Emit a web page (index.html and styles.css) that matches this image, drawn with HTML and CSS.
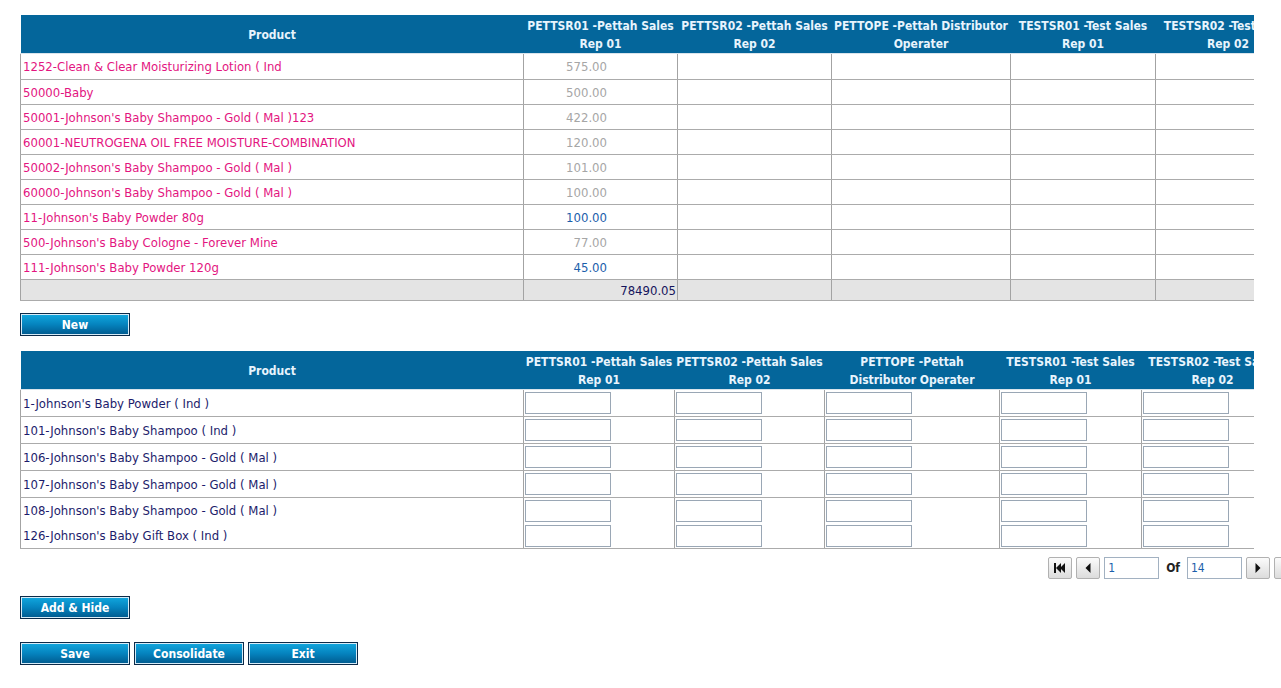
FILE: index.html
```html
<!DOCTYPE html>
<html>
<head>
<meta charset="utf-8">
<title>Allocation</title>
<link rel="stylesheet" href="styles.css">
</head>
<body>
<div class="page">
  <div class="grid-clip">
    <table class="grid g1">
      <colgroup>
        <col class="w-prod"><col class="w154"><col class="w154"><col class="w179"><col class="w145"><col class="w145">
      </colgroup>
      <thead>
        <tr>
          <th>Product</th>
          <th>PETTSR01 -Pettah Sales<br>Rep 01</th>
          <th>PETTSR02 -Pettah Sales<br>Rep 02</th>
          <th>PETTOPE -Pettah Distributor<br>Operater</th>
          <th>TESTSR01 -Test Sales<br>Rep 01</th>
          <th>TESTSR02 -Test Sales<br>Rep 02</th>
        </tr>
      </thead>
      <tbody>
        <tr><td class="prod">1252-Clean &amp; Clear Moisturizing Lotion ( Ind</td><td class="num grey">575.00</td><td></td><td></td><td></td><td></td></tr>
        <tr><td class="prod">50000-Baby</td><td class="num grey">500.00</td><td></td><td></td><td></td><td></td></tr>
        <tr><td class="prod">50001-Johnson's Baby Shampoo - Gold ( Mal )123</td><td class="num grey">422.00</td><td></td><td></td><td></td><td></td></tr>
        <tr><td class="prod">60001-NEUTROGENA OIL FREE MOISTURE-COMBINATION</td><td class="num grey">120.00</td><td></td><td></td><td></td><td></td></tr>
        <tr><td class="prod">50002-Johnson's Baby Shampoo - Gold ( Mal )</td><td class="num grey">101.00</td><td></td><td></td><td></td><td></td></tr>
        <tr><td class="prod">60000-Johnson's Baby Shampoo - Gold ( Mal )</td><td class="num grey">100.00</td><td></td><td></td><td></td><td></td></tr>
        <tr><td class="prod">11-Johnson's Baby Powder 80g</td><td class="num blue">100.00</td><td></td><td></td><td></td><td></td></tr>
        <tr><td class="prod">500-Johnson's Baby Cologne - Forever Mine</td><td class="num grey">77.00</td><td></td><td></td><td></td><td></td></tr>
        <tr><td class="prod">111-Johnson's Baby Powder 120g</td><td class="num blue">45.00</td><td></td><td></td><td></td><td></td></tr>
        <tr class="total"><td></td><td class="sum">78490.05</td><td></td><td></td><td></td><td></td></tr>
      </tbody>
    </table>
  </div>

  <div class="btn-row row-new"><button class="btn">New</button></div>

  <div class="grid-clip clip2">
    <table class="grid g2">
      <colgroup>
        <col class="w-prod"><col class="w151"><col class="w150"><col class="w175"><col class="w142"><col class="w142">
      </colgroup>
      <thead>
        <tr>
          <th>Product</th>
          <th>PETTSR01 -Pettah Sales<br>Rep 01</th>
          <th>PETTSR02 -Pettah Sales<br>Rep 02</th>
          <th>PETTOPE -Pettah<br>Distributor Operater</th>
          <th>TESTSR01 -Test Sales<br>Rep 01</th>
          <th>TESTSR02 -Test Sales<br>Rep 02</th>
        </tr>
      </thead>
      <tbody>
        <tr><td class="prod2">1-Johnson's Baby Powder ( Ind )</td><td class="in"><input type="text"></td><td class="in"><input type="text"></td><td class="in"><input type="text"></td><td class="in"><input type="text"></td><td class="in"><input type="text"></td></tr>
        <tr><td class="prod2">101-Johnson's Baby Shampoo ( Ind )</td><td class="in"><input type="text"></td><td class="in"><input type="text"></td><td class="in"><input type="text"></td><td class="in"><input type="text"></td><td class="in"><input type="text"></td></tr>
        <tr><td class="prod2">106-Johnson's Baby Shampoo - Gold ( Mal )</td><td class="in"><input type="text"></td><td class="in"><input type="text"></td><td class="in"><input type="text"></td><td class="in"><input type="text"></td><td class="in"><input type="text"></td></tr>
        <tr><td class="prod2">107-Johnson's Baby Shampoo - Gold ( Mal )</td><td class="in"><input type="text"></td><td class="in"><input type="text"></td><td class="in"><input type="text"></td><td class="in"><input type="text"></td><td class="in"><input type="text"></td></tr>
        <tr class="open"><td class="prod2">108-Johnson's Baby Shampoo - Gold ( Mal )</td><td class="in"><input type="text"></td><td class="in"><input type="text"></td><td class="in"><input type="text"></td><td class="in"><input type="text"></td><td class="in"><input type="text"></td></tr>
        <tr class="close"><td class="prod2">126-Johnson's Baby Gift Box ( Ind )</td><td class="in"><input type="text"></td><td class="in"><input type="text"></td><td class="in"><input type="text"></td><td class="in"><input type="text"></td><td class="in"><input type="text"></td></tr>
      </tbody>
    </table>
  </div>

  <div class="pager">
    <button class="pg" aria-label="First">
      <svg width="12" height="10" viewBox="0 0 12 10"><rect x="0" y="0" width="2" height="10" fill="#111"/><polygon points="2,5 7,0 7,10" fill="#111"/><polygon points="6,5 11,0 11,10" fill="#111"/></svg>
    </button>
    <button class="pg" aria-label="Previous">
      <svg width="6" height="10" viewBox="0 0 6 10"><polygon points="0.5,5 5.5,0 5.5,10" fill="#111"/></svg>
    </button>
    <input class="pg-in" type="text" value="1">
    <span class="of">Of</span>
    <input class="pg-in" type="text" value="14">
    <button class="pg" aria-label="Next">
      <svg width="6" height="10" viewBox="0 0 6 10"><polygon points="0.5,0 5.5,5 0.5,10" fill="#111"/></svg>
    </button>
    <button class="pg" aria-label="Last">
      <svg width="12" height="10" viewBox="0 0 12 10"><polygon points="1,0 6,5 1,10" fill="#111"/><polygon points="5,0 10,5 5,10" fill="#111"/><rect x="10" y="0" width="2" height="10" fill="#111"/></svg>
    </button>
  </div>

  <div class="btn-row row-add"><button class="btn">Add &amp; Hide</button></div>

  <div class="btn-row row-actions">
    <button class="btn">Save</button>
    <button class="btn">Consolidate</button>
    <button class="btn">Exit</button>
  </div>
</div>
</body>
</html>
```

FILE: styles.css
```css
html, body {
  margin: 0;
  padding: 0;
  background: #ffffff;
  overflow: hidden;
}

body {
  font-family: "DejaVu Sans Condensed", "DejaVu Sans", sans-serif;
  font-size: 13px;
  color: #1c1c6b;
}

.page {
  width: 1278px;
  padding: 15px 0 0 20px;
}

.grid-clip {
  width: 1234px;
  overflow: hidden;
}

.clip2 {
  margin-top: 15px;
}

table.grid {
  border-collapse: collapse;
  table-layout: fixed;
}

.g1 { width: 1280px; }
.g2 { width: 1263px; }

.w-prod { width: 503px; }
.w154 { width: 154px; }
.w179 { width: 179px; }
.w145 { width: 145px; }
.w151 { width: 151px; }
.w150 { width: 150px; }
.w175 { width: 175px; }
.w142 { width: 142px; }

.grid th {
  box-sizing: border-box;
  background: #04669b;
  color: #e8f4fd;
  font-weight: bold;
  font-size: 12px;
  line-height: 18px;
  height: 38px;
  padding: 2px 0 0;
  text-align: center;
  white-space: nowrap;
  border: none;
  border-bottom: 1px solid #d9e4ec;
}

.grid td {
  border-left: 1px solid #a3a3a3;
  border-right: 1px solid #a3a3a3;
  border-bottom: 1px solid #ababab;
  padding: 0;
  white-space: nowrap;
  font-size: 13px;
}

.g1 tbody tr:first-child td {
  height: 25px;
}

.g1 td {
  height: 24px;
}

.prod {
  color: #e3157f;
  padding-left: 2px !important;
}

.prod2 {
  color: #1c1c6b;
  padding-left: 2px !important;
}

.num {
  text-align: right;
  padding-right: 70px !important;
}

.grey { color: #a6a6a6; }
.blue { color: #1b5eab; }

.g1 .total td {
  background: #e4e4e4;
  height: 20px;
}

.sum {
  text-align: right;
  color: #14145c;
  padding-right: 1px !important;
}

.g2 td {
  height: 26px;
}

.g2 td.in {
  padding-left: 1px;
  vertical-align: middle;
}

.g2 tr.open td {
  border-bottom: none;
  height: 25px;
}

.g2 tr.close td {
  height: 25px;
}

.grid input {
  display: block;
  box-sizing: border-box;
  width: 86px;
  height: 22px;
  margin: 0;
  padding: 0 3px;
  border: 1px solid #9aa7b5;
  background: #ffffff;
  font: inherit;
}

.btn-row {
  display: flex;
  gap: 4px;
}

.row-new { margin-top: 12px; }
.row-add { margin-top: 17px; }
.row-actions { margin-top: 23px; }

.btn {
  box-sizing: border-box;
  width: 110px;
  height: 23px;
  margin: 0;
  padding: 0;
  border: 1px solid #0c2a48;
  box-shadow: inset 0 0 0 1px #d6ecf8;
  background: linear-gradient(#11a8df 0%, #0583be 50%, #00598d 100%);
  color: #ffffff;
  font-family: "DejaVu Sans Condensed", "DejaVu Sans", sans-serif;
  font-size: 12px;
  font-weight: bold;
  line-height: 20px;
  text-align: center;
  cursor: pointer;
}

.pager {
  display: flex;
  justify-content: flex-end;
  align-items: center;
  gap: 4px;
  margin-top: 8px;
  height: 22px;
}

.pg {
  box-sizing: border-box;
  width: 24px;
  height: 22px;
  margin: 0;
  padding: 0;
  display: flex;
  align-items: center;
  justify-content: center;
  border: 1px solid #b1b1b1;
  border-radius: 2px;
  background: linear-gradient(#fbfbfb, #dcdcdc);
}

.pg-in {
  box-sizing: border-box;
  width: 55px;
  height: 22px;
  margin: 0;
  padding: 0 3px;
  border: 1px solid #a2b1c1;
  color: #1b5eab;
  font-family: "DejaVu Sans Condensed", "DejaVu Sans", sans-serif;
  font-size: 12px;
}

.of {
  margin: 0 3px;
  color: #222222;
  font-weight: bold;
  font-size: 12px;
}
```
